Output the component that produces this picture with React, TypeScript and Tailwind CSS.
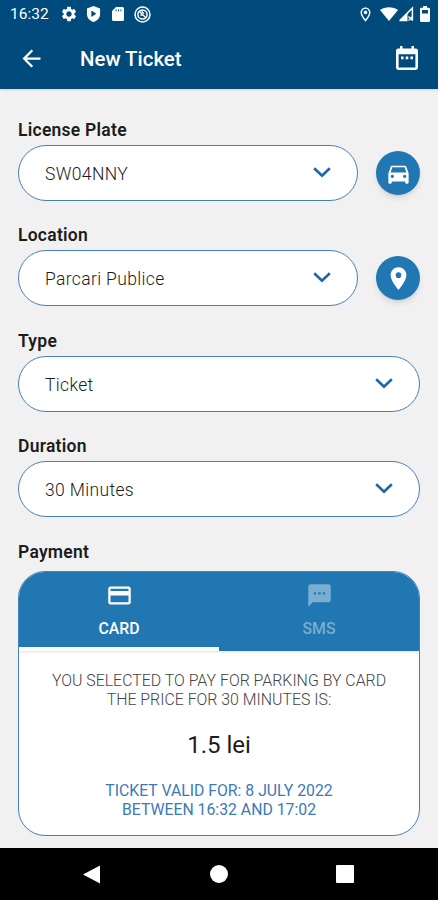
import { useState } from 'react';
import type { ReactNode } from 'react';
import {
  MdArrowBack,
  MdCreditCard,
  MdDirectionsCar,
  MdLocationOn,
  MdOutlineLocationOn,
  MdSettings,
  MdTextsms,
} from 'react-icons/md';

function StatusBar() {
  return (
    <div className="flex h-7 items-center justify-between pl-[10px] pr-2 text-white">
      <div className="flex items-center">
        <span className="w-[50px] pt-[2px] text-[15.500px] leading-none">16:32</span>
        <MdSettings className="h-[18px] w-[18px]" />
        <svg className="ml-2 h-4 w-[15px]" viewBox="0 0 16 16" preserveAspectRatio="none" fill="currentColor" fillRule="evenodd">
          <path d="M8 0 15 2.600V8c0 3.800-3 6.800-7 8-4-1.200-7-4.200-7-8V2.600zM5.700 4.600v6.400L11 7.800z" />
        </svg>
        <svg className="ml-[9px] h-4 w-4" viewBox="0 0 16 16" fill="currentColor" fillRule="evenodd">
          <path d="M6 1h6.500A1.500 1.500 0 0 1 14 2.500v11a1.500 1.500 0 0 1-1.500 1.500h-9A1.500 1.500 0 0 1 2 13.500V5zM5.600 3.600v1.600h1V3.600zM8 3.600v1.600h1V3.600zM10.400 3.600v1.600h1V3.600z" />
        </svg>
        <svg className="ml-2 h-[17px] w-[17px]" viewBox="0 0 17 17" fill="none" stroke="currentColor">
          <circle cx="8.500" cy="8.500" r="7.500" strokeWidth="1.500" />
          <circle cx="8.500" cy="8.500" r="4.600" strokeWidth="1.500" />
          <path d="M5.200 5.300 11.800 11.700M7.500 5.200 10 7.600M6.300 9.200h3" strokeWidth="1.300" />
        </svg>
      </div>
      <div className="flex items-center">
        <MdOutlineLocationOn className="h-[17px] w-[17px]" />
        <svg className="ml-[6px] h-[14px] w-[18px]" viewBox="0 0 18 14" fill="currentColor">
          <path d="M0 3C5-.6 13-.6 18 3L9 14z" />
        </svg>
        <svg className="h-4 w-4" viewBox="0 0 16 16" fill="none" stroke="currentColor">
          <path d="M1.800 14.600 14.400 2v12.600" strokeWidth="1.500" />
          <path d="M1 15.300 9.500 7v8.300z" fill="currentColor" stroke="none" />
          <path d="m10.500 10.500 4 4M14.500 10.500l-4 4" strokeWidth="1.300" />
        </svg>
        <svg className="ml-[6px] h-4 w-[10px]" viewBox="0 0 10 16" fill="currentColor" fillRule="evenodd">
          <path d="M3 0h4v1.800h1.800A1.200 1.200 0 0 1 10 3v11.800A1.200 1.200 0 0 1 8.800 16H1.200A1.200 1.200 0 0 1 0 14.800V3a1.200 1.200 0 0 1 1.200-1.200H3zM2 4v3.500h6V4z" />
        </svg>
      </div>
    </div>
  );
}

function CalendarIcon() {
  return (
    <svg className="mb-px h-6 w-[22px]" viewBox="0 0 22 24" fill="currentColor" fillRule="evenodd">
      <path d="M4 0h2.500v2.400h9V0H18v2.400h1.500A2.400 2.400 0 0 1 22 4.800v16.800a2.400 2.400 0 0 1-2.400 2.400H2.400A2.400 2.400 0 0 1 0 21.600V4.800a2.400 2.400 0 0 1 2.400-2.400H4zM2.600 8.200v13.200h16.800V8.200z" />
      <path d="M5 10.500h2.600v2.700H5zM9.700 10.500h2.600v2.700H9.700zM14.400 10.500H17v2.700h-2.600z" />
    </svg>
  );
}

interface FieldProps {
  label: string;
  value: string;
  action?: ReactNode;
}

function Field({ label, value, action }: FieldProps) {
  return (
    <div className="h-[105.400px] shrink-0">
      <p className="h-[26px] pt-px text-[17.500px] font-semibold leading-5 tracking-[0.250px] text-[#1c1c1c]">{label}</p>
      <div className="flex items-center gap-[18px]">
        <button className="flex h-14 flex-1 items-center justify-between rounded-full border border-[#4580b9] bg-white px-[26px]">
          <span className="pt-[2px] text-[17.500px] font-light tracking-[0.350px] text-[#1c1c1c]">{value}</span>
          <svg className="mb-px h-[11px] w-[18px]" viewBox="0 0 18 11" fill="none" stroke="#1b67a8" strokeWidth="2.600">
            <path d="M1.200 1.200 9 8.800 16.800 1.200" />
          </svg>
        </button>
        {action && (
          <button className="flex h-11 w-11 items-center justify-center rounded-full bg-[#2077b2] text-white shadow-md">
            {action}
          </button>
        )}
      </div>
    </div>
  );
}

const tabs = [
  { id: 'card', label: 'CARD', icon: MdCreditCard },
  { id: 'sms', label: 'SMS', icon: MdTextsms },
];

function PaymentCard() {
  const [active, setActive] = useState('card');

  return (
    <div className="h-[265px] overflow-hidden rounded-[27px] border border-[#4580b9] bg-white text-center">
      <div className="flex h-[79px] bg-[#2077b2] shadow">
        {tabs.map(({ id, label, icon: Icon }) => (
          <button
            key={id}
            onClick={() => setActive(id)}
            className={`flex flex-1 flex-col items-center border-b-4 pt-[10px] ${
              active === id ? 'border-white text-white' : 'border-transparent text-[#79add1]'
            }`}
          >
            <Icon className="h-[27px] w-[27px]" />
            <span className="mt-[10px] text-[15.800px] font-medium leading-5">{label}</span>
          </button>
        ))}
      </div>
      <p className="mt-5 text-[15.900px] font-light leading-[19px] text-[#444]">
        YOU SELECTED TO PAY FOR PARKING BY CARD
        <br />
        THE PRICE FOR 30 MINUTES IS:
      </p>
      <p className="mt-5 text-[24px] leading-8 text-[#1c1c1c]">1.5 lei</p>
      <p className="mt-5 text-[15.800px] leading-[19px] text-[#3c7ab5]">
        TICKET VALID FOR: 8 JULY 2022
        <br />
        BETWEEN 16:32 AND 17:02
      </p>
    </div>
  );
}

function NavigationBar() {
  return (
    <div className="flex h-[52px] shrink-0 items-center justify-between bg-black pl-[83px] pr-[84px]">
      <svg className="h-[19px] w-[18px]" viewBox="0 0 18 19" fill="white">
        <path d="M17 .500v18L0 9.500z" />
      </svg>
      <div className="h-[18px] w-[18px] rounded-full bg-white" />
      <div className="h-[18px] w-[18px] rounded-[1px] bg-white" />
    </div>
  );
}

export default function App() {
  return (
    <div className="flex h-[900px] w-[438px] flex-col overflow-hidden bg-[#f1f1f1] font-[Roboto,sans-serif]">
      <header className="h-[89px] shrink-0 bg-[#014a7c] text-white shadow-sm">
        <StatusBar />
        <div className="flex h-[61px] items-center pl-[18px] pr-5">
          <MdArrowBack className="h-[27px] w-[27px]" />
          <h1 className="ml-[35px] flex-1 pt-px text-[20.400px] font-medium">New Ticket</h1>
          <CalendarIcon />
        </div>
      </header>
      <main className="flex-1 px-[18px] pt-[30px]">
        <Field label="License Plate" value="SW04NNY" action={<MdDirectionsCar className="h-[27px] w-[27px]" />} />
        <Field label="Location" value="Parcari Publice" action={<MdLocationOn className="h-[27px] w-[27px]" />} />
        <Field label="Type" value="Ticket" />
        <Field label="Duration" value="30 Minutes" />
        <p className="h-[30px] pt-px text-[17.500px] font-semibold leading-5 tracking-[0.250px] text-[#1c1c1c]">Payment</p>
        <PaymentCard />
      </main>
      <NavigationBar />
    </div>
  );
}
